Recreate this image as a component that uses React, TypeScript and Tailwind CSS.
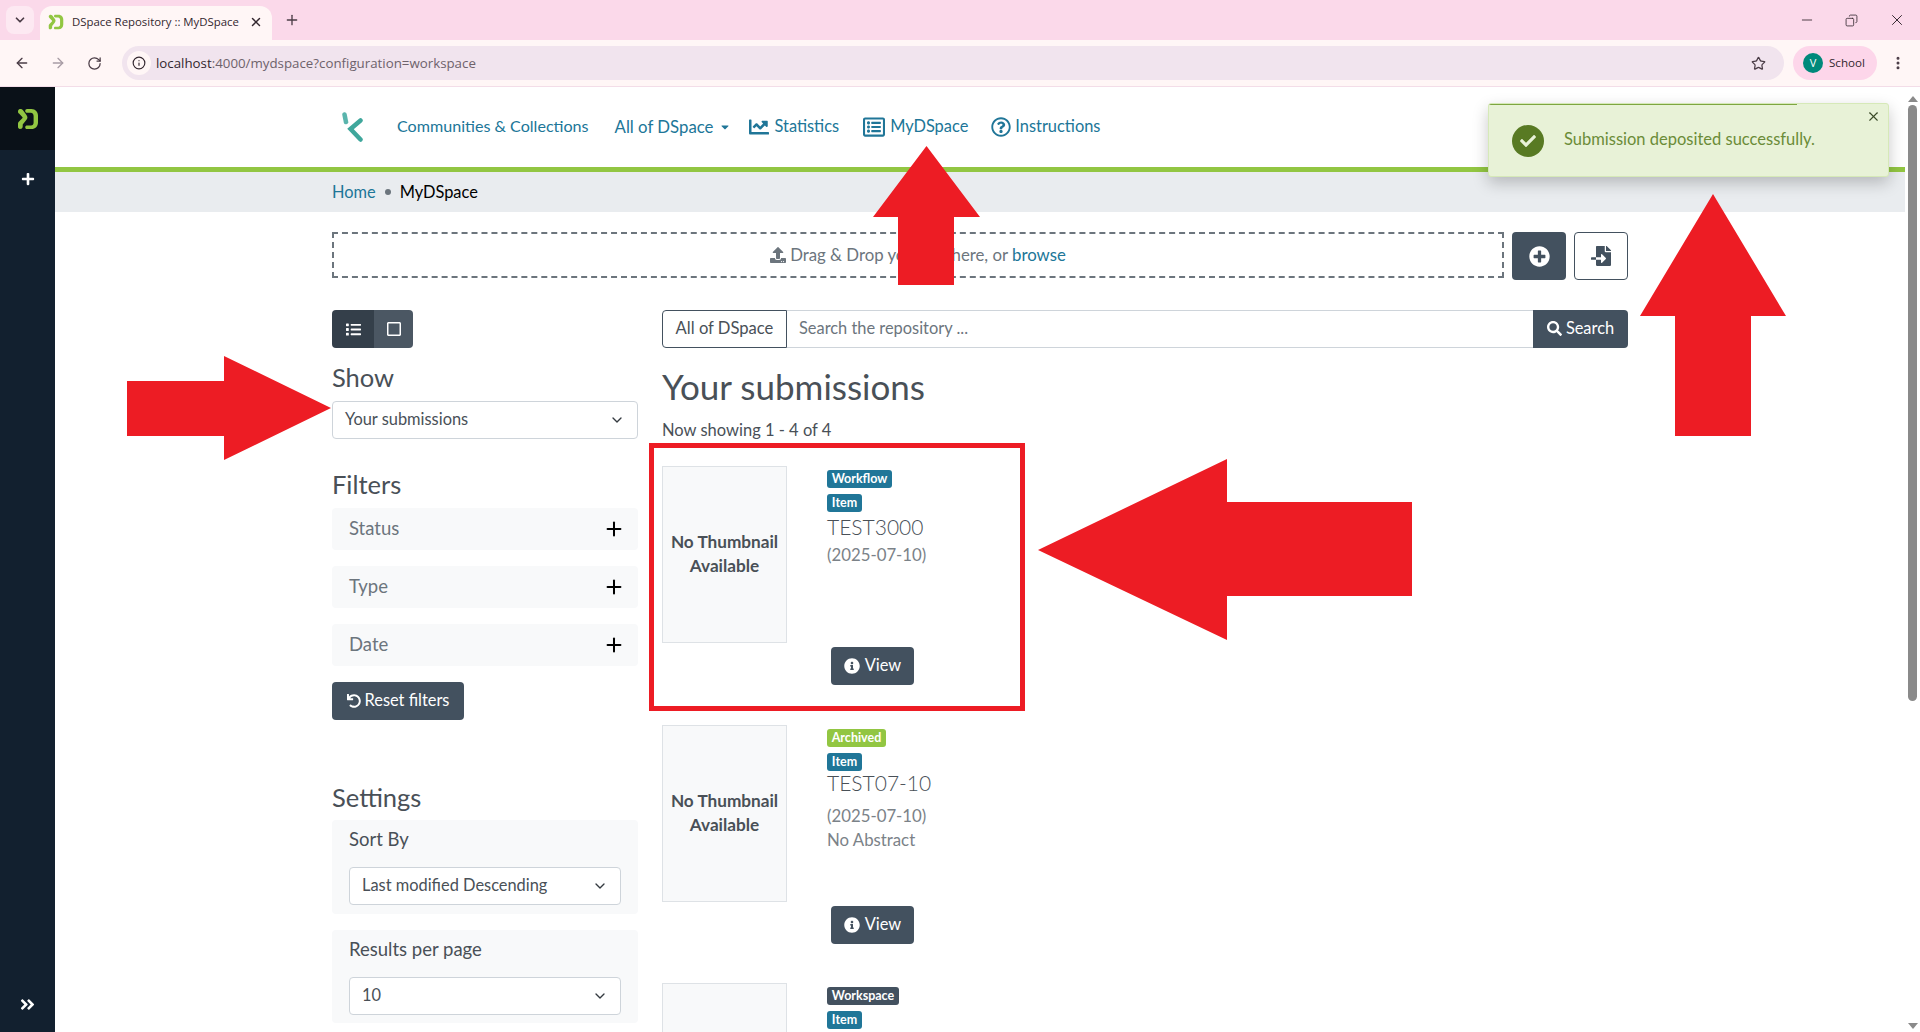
import { ArrowLeft, ArrowRight, ChevronDown, Copy, Info, Minus, MoreVertical, Plus, RotateCw, Star, X } from "lucide-react";
import {
  FaAngleDoubleRight,
  FaCaretDown,
  FaChartLine,
  FaCheck,
  FaFileImport,
  FaInfoCircle,
  FaList,
  FaPlus,
  FaPlusCircle,
  FaRegListAlt,
  FaRegQuestionCircle,
  FaRegSquare,
  FaSearch,
  FaUndo,
  FaUpload,
} from "react-icons/fa";

const DSpaceLogo = ({ className }: { className: string }) => (
  <svg viewBox="0 0 22 22" className={className} fill="#92c642">
    <path d="M1 3.500C1 1.600 2.400 1 3.600 1c1 0 1.700.4 2.400 1.200l3.300 4.500c1.500 2 1.500 3.400 0 5.300l-3.600 4.400v2.100C5.700 20.200 4.500 21 3 21c-1.300 0-2-.9-2-2.200v-3c0-1 .4-1.500 1-2.200l3.300-3.300c.5-.5.5-.9 0-1.400L2 5.600C1.300 5 1 4.500 1 3.500z" />
    <path d="M10 1h4.500C18.500 1 21 4 21 7.500v7c0 3.800-2.700 6.500-6.500 6.500H10c-1.200 0-1.800-.8-1.800-1.800 0-1 .8-1.700 2-1.700h3.800c1.600 0 2.600-1.200 2.600-3V8c0-2-1-3.300-2.800-3.300h-3.500C9 4.700 8.200 4 8.200 2.900 8.200 1.800 9 1 10 1z" />
  </svg>
);

const Select = ({ label, width }: { label: string; width: string }) => (
  <div className={`flex h-[38px] items-center justify-between rounded border border-[#ced4da] bg-white pl-[12px] pr-[12px] text-[#495057] ${width}`}>
    <span className="pb-[1px]">{label}</span>
    <ChevronDown size={16} strokeWidth={2} className="text-[#343a40]" />
  </div>
);

const FilterBox = ({ label }: { label: string }) => (
  <div className="flex h-[42px] items-center justify-between rounded bg-[#f8f9fa] pl-[17px] pr-[13px] text-[#6c757d]">
    <span className="pb-[1px] text-[18.5px]">{label}</span>
    <Plus size={22} strokeWidth={2.2} className="text-black" />
  </div>
);

const Badge = ({ label, color, width }: { label: string; color: string; width: string }) => (
  <div className={`flex h-[18px] items-center justify-center rounded-[3px] text-[12.5px] leading-none font-bold text-white ${color} ${width}`}>
    {label}
  </div>
);

const ViewButton = () => (
  <div className="col-start-2 mt-1 ml-1 flex h-[38px] w-[83px] items-center justify-center gap-[5px] rounded bg-[#43515f] pb-[1px] text-white">
    <FaInfoCircle size={16} />
    View
  </div>
);

const Result = ({
  status,
  statusColor,
  statusWidth,
  rowHeight,
  title,
  abstract,
  highlight,
}: {
  status: string;
  statusColor: string;
  statusWidth: string;
  rowHeight: string;
  title?: string;
  abstract?: string;
  highlight?: boolean;
}) => (
  <div className={`relative grid grid-cols-[125px_1fr] grid-rows-[177px_auto] content-start gap-x-10 ${rowHeight}`}>
    <div className="flex items-center justify-center border border-[#dee2e6] bg-[#f8f9fa] pb-[2px] text-center text-[17.2px] leading-6 font-bold text-[#495057]">
      {title && (
        <span>
          No Thumbnail
          <br />
          Available
        </span>
      )}
    </div>
    <div className="pt-1">
      <div className="flex flex-col gap-[6px]">
        <Badge label={status} color={statusColor} width={statusWidth} />
        <Badge label="Item" color="bg-[#207698]" width="w-[35px]" />
      </div>
      {title && (
        <>
          <div className={`text-[21px] leading-6 font-light text-[#495057] ${abstract ? "mt-0" : "mt-[3px]"}`}>{title}</div>
          <div className={`text-[16.8px] leading-6 text-[#7b8288] ${abstract ? "mt-[9px]" : "mt-1"}`}>(2025-07-10)</div>
          {abstract && <div className="text-[16.8px] leading-6 text-[#7b8288]">{abstract}</div>}
        </>
      )}
    </div>
    {title && <ViewButton />}
    {highlight && <div className="absolute top-[-23px] left-[-13px] h-[268px] w-[376px] border-[5px] border-[#ed1c24]" />}
  </div>
);

export default function App() {
  return (
    <div className="relative h-[1032px] w-[1920px] overflow-hidden bg-white text-[16.4px] text-[#343a40] [font-family:Lato,sans-serif]">
      {/* browser chrome */}
      <div className="flex h-[40px] items-end bg-[#fbd9ea] text-[#4a3c46]">
        <div className="mb-[6px] ml-[6px] flex h-[28px] w-[28px] items-center justify-center rounded-lg bg-[#fde9f2]">
          <ChevronDown size={14} strokeWidth={3} />
        </div>
        <div className="ml-[6px] flex h-[34px] w-[232px] items-center rounded-t-xl bg-[#fff6f6] pb-[2px] pl-[8px] text-[11.4px] text-[#33272f] [font-family:'Open_Sans',sans-serif]">
          <DSpaceLogo className="h-[16px] w-[16px]" />
          <span className="ml-[8px]">DSpace Repository :: MyDSpace</span>
          <X size={14} strokeWidth={2.5} className="ml-[10px]" />
        </div>
        <Plus size={16} strokeWidth={2} className="mb-[12px] ml-[12px]" />
        <div className="mb-[11px] ml-auto flex items-center gap-[30px] pr-[14px] text-[#33272f]">
          <Minus size={16} strokeWidth={1.3} />
          <Copy size={13} strokeWidth={1.5} className="-scale-x-100" />
          <X size={18} strokeWidth={1.3} />
        </div>
      </div>
      <div className="flex h-[47px] items-center border-b border-[#f3dde8] bg-[#fff6f6] text-[#4a3c46]">
        <ArrowLeft size={16} strokeWidth={2} className="ml-[14px]" />
        <ArrowRight size={16} strokeWidth={2} className="ml-[20px] text-[#a89ca5]" />
        <RotateCw size={15} strokeWidth={2} className="ml-[21px]" />
        <div className="ml-[20px] flex h-[34px] w-[1662px] items-center rounded-full bg-[#f1e4ee] pl-[5px] pr-[18px] text-[13.3px] [font-family:'Open_Sans',sans-serif]">
          <div className="flex h-[24px] w-[24px] items-center justify-center rounded-full bg-[#fff6f6]">
            <Info size={14} strokeWidth={2} className="text-[#33272f]" />
          </div>
          <span className="ml-[5px] pt-[1px] text-[#33272f]">localhost</span>
          <span className="pt-[1px] text-[#6e626b]">:4000/mydspace?configuration=workspace</span>
          <Star size={15} strokeWidth={2} className="ml-auto" />
        </div>
        <div className="ml-[9px] flex h-[34px] w-[84px] items-center rounded-full bg-[#fdd6ea] pl-[10px] text-[11.6px] text-[#33272f] [font-family:'Open_Sans',sans-serif]">
          <div className="flex h-[20px] w-[20px] items-center justify-center rounded-full bg-[#00897b] text-[11px] text-white">V</div>
          <span className="ml-[6px]">School</span>
        </div>
        <MoreVertical size={16} strokeWidth={2.5} className="ml-[13px]" />
      </div>

      <div className="flex h-[945px]">
        {/* admin sidebar */}
        <div className="flex w-[55px] flex-col bg-[#12202f] text-white">
          <div className="flex h-[63px] items-center justify-center bg-[#0a1118]">
            <DSpaceLogo className="h-[22px] w-[22px]" />
          </div>
          <div className="flex h-[58px] items-center justify-center">
            <FaPlus size={14} />
          </div>
          <div className="mt-auto flex h-[56px] items-center justify-center">
            <FaAngleDoubleRight size={17} />
          </div>
        </div>

        <div className="w-[1850px] overflow-hidden">
          {/* header */}
          <div className="h-[85px] border-b-[5px] border-[#92c642]">
            <div className="mx-auto flex h-[80px] w-[1320px] items-center px-3 pb-[1px] text-[#207698]">
              <svg viewBox="0 0 21 30" className="ml-[10px] h-[30px] w-[21px]" fill="none" strokeLinecap="round" strokeWidth="4.500">
                <path d="M2.500 2.500L4 10" stroke="#5ab5ad" />
                <path d="M18.500 8.500L8.500 17L18.500 27.500" stroke="#3fa79c" />
              </svg>
              <span className="ml-[34px] pb-[1px] text-[16.1px]">Communities &amp; Collections</span>
              <span className="ml-[26px] text-[16.8px]">All of DSpace</span>
              <FaCaretDown size={12} className="ml-[6px]" />
              <FaChartLine size={20} className="ml-[18px]" />
              <span className="ml-[5px]">Statistics</span>
              <FaRegListAlt size={22} className="ml-[24px]" />
              <span className="ml-[5px]">MyDSpace</span>
              <FaRegQuestionCircle size={20} className="ml-[23px]" />
              <span className="ml-[4px]">Instructions</span>
            </div>
          </div>
          {/* breadcrumb */}
          <div className="h-[40px] bg-[#e9ecef]">
            <div className="mx-auto flex h-full w-[1320px] items-center px-3">
              <span className="text-[#207698]">Home</span>
              <span className="mx-[9px] h-[6px] w-[6px] rounded-full bg-[#6c757d]" />
              <span className="text-black">MyDSpace</span>
            </div>
          </div>

          <div className="mx-auto w-[1320px] px-3 pt-[20px]">
            {/* upload row */}
            <div className="flex h-[48px] items-start">
              <div className="flex h-[46px] w-[1172px] items-center justify-center gap-[4px] border-2 border-dashed border-[#6c757d] pb-[1px] text-[16.8px] text-[#6c757d]">
                <FaUpload size={16} />
                <span>
                  Drag &amp; Drop your file here, or <span className="text-[#207698]">browse</span>
                </span>
              </div>
              <div className="ml-[8px] flex h-[48px] w-[54px] items-center justify-center rounded bg-[#43515f] text-white">
                <FaPlusCircle size={21} />
              </div>
              <div className="ml-[8px] flex h-[48px] w-[54px] items-center justify-center rounded border border-[#43515f] bg-white text-[#43515f]">
                <FaFileImport size={20} />
              </div>
            </div>

            <div className="mt-[30px] flex gap-6">
              {/* left column */}
              <div className="w-[306px] shrink-0">
                <div className="flex h-[38px] w-[81px] overflow-hidden rounded text-white">
                  <div className="flex w-[42px] items-center justify-center bg-[#343f4a]">
                    <FaList size={15} />
                  </div>
                  <div className="flex w-[39px] items-center justify-center bg-[#4b5763]">
                    <FaRegSquare size={16} />
                  </div>
                </div>
                <div className="mt-[14px] text-[25.5px] leading-[30px] text-[#495057]">Show</div>
                <Select label="Your submissions" width="mt-[9px] w-full" />
                <div className="mt-[30px] text-[25.5px] leading-[30px] text-[#495057]">Filters</div>
                <div className="mt-[9px] flex flex-col gap-4">
                  <FilterBox label="Status" />
                  <FilterBox label="Type" />
                  <FilterBox label="Date" />
                </div>
                <div className="mt-4 flex h-[38px] w-[132px] items-center justify-center gap-[4px] rounded bg-[#43515f] pb-[1px] text-white">
                  <FaUndo size={14} />
                  Reset filters
                </div>
                <div className="mt-[62px] text-[25.5px] leading-[30px] text-[#495057]">Settings</div>
                <div className="mt-[8px] h-[94px] rounded bg-[#f8f9fa] px-[17px] pt-[7px]">
                  <div className="text-[18.5px] leading-6 text-[#495057]">Sort By</div>
                  <Select label="Last modified Descending" width="mt-[16px]" />
                </div>
                <div className="mt-4 h-[93px] rounded bg-[#f8f9fa] px-[17px] pt-[7px]">
                  <div className="text-[18.5px] leading-6 text-[#495057]">Results per page</div>
                  <Select label="10" width="mt-[16px]" />
                </div>
              </div>

              {/* results column */}
              <div className="w-[966px]">
                <div className="flex h-[38px] items-stretch">
                  <div className="flex w-[125px] items-center justify-center rounded-l border border-[#43515f] pb-[1px] text-[16.6px] text-[#495057]">All of DSpace</div>
                  <div className="flex flex-1 items-center border-y border-[#ced4da] pb-[1px] pl-[12px] text-[#6c757d]">Search the repository ...</div>
                  <div className="flex w-[95px] items-center justify-center gap-[4px] rounded-r bg-[#43515f] pb-[1px] text-white">
                    <FaSearch size={15} />
                    Search
                  </div>
                </div>
                <div className="mt-[18px] text-[35px] leading-10 text-[#495057]">Your submissions</div>
                <div className="mt-[12px] text-[16.5px] leading-6 text-[#495057]">Now showing 1 - 4 of 4</div>
                <div className="mt-6">
                  <Result status="Workflow" statusColor="bg-[#207698]" statusWidth="w-[65px]" rowHeight="h-[259px]" title="TEST3000" highlight />
                  <Result status="Archived" statusColor="bg-[#92c642]" statusWidth="w-[59px]" rowHeight="h-[258px]" title="TEST07-10" abstract="No Abstract" />
                  <Result status="Workspace" statusColor="bg-[#43515f]" statusWidth="w-[72px]" rowHeight="h-[258px]" />
                </div>
              </div>
            </div>
          </div>
        </div>

        {/* page scrollbar */}
        <div className="relative w-[15px] bg-white">
          <div className="absolute top-[9px] left-[3px] h-0 w-0 border-x-[5px] border-b-[6px] border-x-transparent border-b-[#8a8a8a]" />
          <div className="absolute top-[18px] left-[3px] h-[596px] w-[9px] rounded-full bg-[#8a8a8a]" />
          <div className="absolute bottom-[3px] left-[3px] h-0 w-0 border-x-[5px] border-t-[6px] border-x-transparent border-t-[#8a8a8a]" />
        </div>
      </div>

      {/* toast */}
      <div className="absolute top-[103px] left-[1488px] h-[74px] w-[401px] overflow-hidden rounded-[3px] border border-[#d6e9b8] bg-[#e8f2d7] shadow-[0_6px_16px_rgba(0,0,0,0.22)]">
        <div className="h-[1px] w-[308px] bg-[#7da640]" />
        <div className="flex h-[72px] items-center pb-[1px] pl-[23px] text-[#6b8c38]">
          <div className="flex h-[32px] w-[32px] items-center justify-center rounded-full bg-[#587a23] text-[#e8f2d7]">
            <FaCheck size={16} />
          </div>
          <span className="ml-[20px] pb-[2px] text-[16.5px]">Submission deposited successfully.</span>
        </div>
        <X size={15} strokeWidth={1.8} className="absolute top-[5px] right-[7px] text-[#3b4a28]" />
      </div>

      {/* annotation arrows */}
      <svg viewBox="0 0 1920 1032" className="pointer-events-none absolute top-0 left-0 h-[1032px] w-[1920px]" fill="#ed1c24">
        <polygon points="926.500,146 980,217 954,217 954,285 898,285 898,217 873,217" />
        <polygon points="1713,194 1786,316 1751,316 1751,436 1675,436 1675,316 1640,316" />
        <polygon points="331,408 224,356 224,381 127,381 127,436 224,436 224,460" />
        <polygon points="1038,550 1227,459 1227,502 1412,502 1412,596 1227,596 1227,640" />
      </svg>
    </div>
  );
}
